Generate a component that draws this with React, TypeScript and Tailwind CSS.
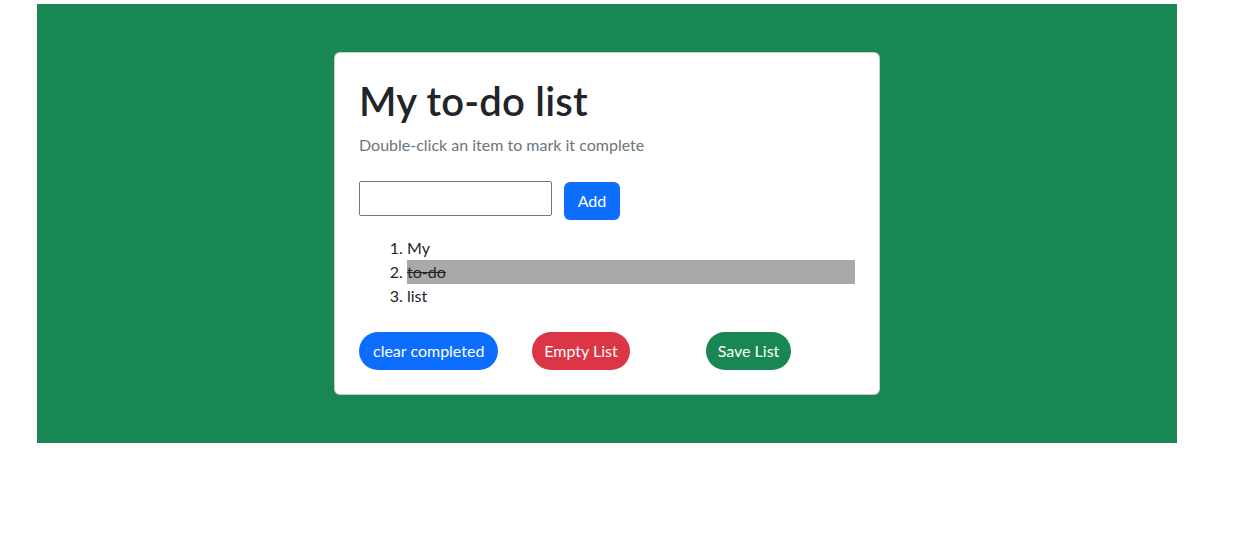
const items = [
  { text: "My", done: false },
  { text: "to-do", done: true },
  { text: "list", done: false },
];

export default function App() {
  return (
    <div className="min-h-[540px] bg-white pt-1 font-['Lato',sans-serif] text-[16px] text-[#212529]">
      <div className="ml-[37px] w-[1140px] bg-[#198754] py-12">
        <div className="mx-auto w-[546px] rounded-[6px] border border-black/20 bg-white p-6">
          <h1 className="text-[40px] font-semibold leading-[48px] tracking-[0.2px]">My to-do list</h1>
          <p className="mt-2 leading-6 text-[#6c757d]">Double-click an item to mark it complete</p>

          <div className="mt-6 flex items-start gap-3">
            <input
              type="text"
              className="h-[35px] w-[193px] border border-[#767676] rounded-[2px] px-2 outline-none"
            />
            <button className="mt-px h-[38px] w-[56px] rounded-[6px] bg-[#0d6efd] text-white">Add</button>
          </div>

          <ol className="mt-4 list-decimal pl-12 leading-6">
            {items.map((item) => (
              <li key={item.text} className={item.done ? "bg-[#a9a9a9] line-through" : ""}>
                {item.text}
              </li>
            ))}
          </ol>

          <div className="mt-6 grid grid-cols-3 gap-6">
            <div>
              <button className="h-[38px] rounded-full bg-[#0d6efd] px-[14px] text-white">clear completed</button>
            </div>
            <div>
              <button className="h-[38px] rounded-full bg-[#dc3545] px-3 text-white">Empty List</button>
            </div>
            <div>
              <button className="h-[38px] rounded-full bg-[#198754] px-3 text-white">Save List</button>
            </div>
          </div>
        </div>
      </div>
    </div>
  );
}
